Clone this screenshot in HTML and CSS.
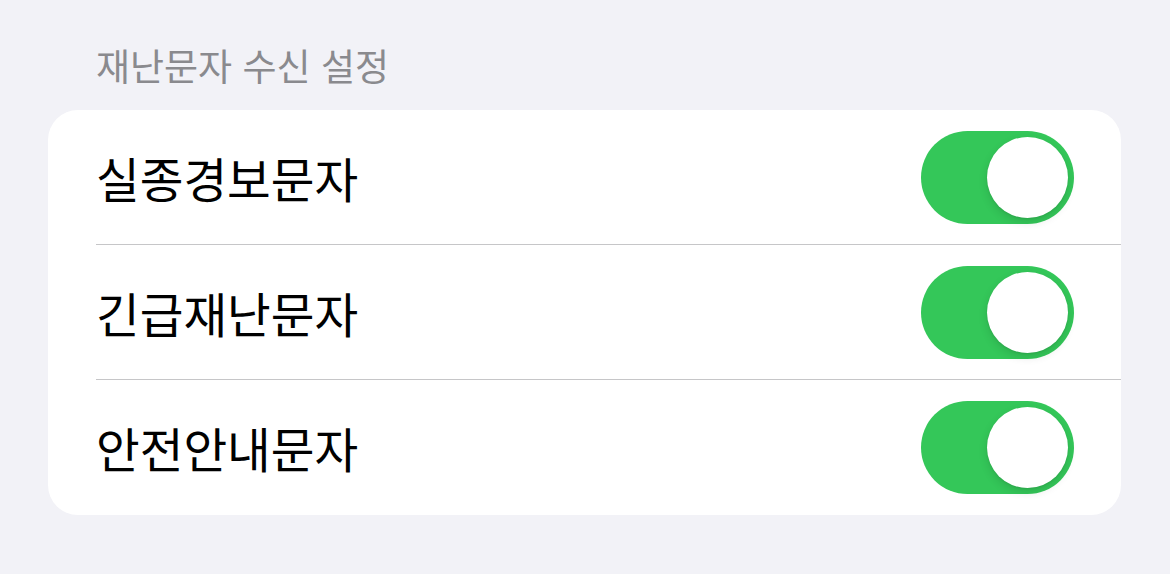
FILE: index.html
```html
<!DOCTYPE html>
<html lang="ko">
<head>
    <meta charset="UTF-8">
    <title>재난문자 수신 설정</title>
    <link rel="stylesheet" href="styles.css">
</head>
<body>
<div class="settings">
    <h2 class="group_title">재난문자 수신 설정</h2>
    <ul class="group">
        <li class="row">
            <div class="row_inner">
                <span class="row_label">실종경보문자</span>
                <span class="switch on"><span class="knob"></span></span>
            </div>
        </li>
        <li class="row">
            <div class="row_inner">
                <span class="row_label">긴급재난문자</span>
                <span class="switch on"><span class="knob"></span></span>
            </div>
        </li>
        <li class="row">
            <div class="row_inner">
                <span class="row_label">안전안내문자</span>
                <span class="switch on"><span class="knob"></span></span>
            </div>
        </li>
    </ul>
</div>
</body>
</html>
```

FILE: styles.css
```css
* {
    margin: 0;
    padding: 0;
    list-style: none;
    border: none;
    box-sizing: border-box;
}

body {
    background: #f2f2f7;
    font-family: "Noto Sans CJK KR", "Noto Sans", sans-serif;
    width: 1170px;
    height: 574px;
    overflow: hidden;
}

.settings {
    padding: 42px 49px 0 48px;
}

.group_title {
    font-size: 37px;
    font-weight: 400;
    line-height: 46px;
    color: #8a8a8e;
    padding-left: 48px;
    margin-bottom: 22px;
}

.group {
    background: #fff;
    border-radius: 30px;
    overflow: hidden;
}

.row {
    padding-left: 48px;
}

.row_inner {
    height: 135px;
    display: flex;
    align-items: center;
    justify-content: space-between;
    padding-right: 47px;
    border-bottom: 1px solid #c6c6c8;
}

.row:last-child .row_inner {
    border-bottom: none;
}

.row_label {
    font-size: 47.5px;
    color: #000;
}

.switch {
    width: 153px;
    height: 93px;
    border-radius: 47px;
    background: #e9e9eb;
    display: flex;
    align-items: center;
    padding: 6px;
}

.switch.on {
    background: #34c759;
    justify-content: flex-end;
}

.knob {
    width: 81px;
    height: 81px;
    border-radius: 50%;
    background: #fff;
    box-shadow: 0 4px 10px rgba(0, 0, 0, 0.12), 0 1px 2px rgba(0, 0, 0, 0.08);
}
```
